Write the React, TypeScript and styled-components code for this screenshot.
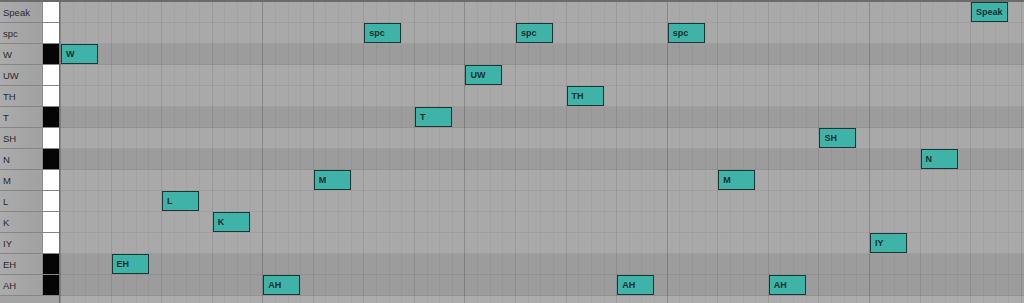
import styled, { createGlobalStyle } from 'styled-components';

const BEAT = 50.56;
const ROW_H = 21;

const GlobalStyle = createGlobalStyle`
  html, body {
    margin: 0;
    padding: 0;
    background: #a9a9a9;
    overflow: hidden;
  }
  body {
    font-family: "Liberation Sans", Arial, sans-serif;
  }
`;

type Lane = { name: string; black: boolean; notes: number[] };

// note positions are beat indexes from the start of the clip
const lanes: Lane[] = [
  { name: 'Speak', black: false, notes: [18] },
  { name: 'spc', black: false, notes: [6, 9, 12] },
  { name: 'W', black: true, notes: [0] },
  { name: 'UW', black: false, notes: [8] },
  { name: 'TH', black: false, notes: [10] },
  { name: 'T', black: true, notes: [7] },
  { name: 'SH', black: false, notes: [15] },
  { name: 'N', black: true, notes: [17] },
  { name: 'M', black: false, notes: [5, 13] },
  { name: 'L', black: false, notes: [2] },
  { name: 'K', black: false, notes: [3] },
  { name: 'IY', black: false, notes: [16] },
  { name: 'EH', black: true, notes: [1] },
  { name: 'AH', black: true, notes: [4, 11, 14] },
];

function App() {
  return (
    <>
      <GlobalStyle />
      <Editor>
        <TopStrip />
        <Body>
          <KeyColumn>
            {lanes.map((lane) => (
              <KeyRow key={lane.name}>
                <Label>{lane.name}</Label>
                <Key $black={lane.black} />
              </KeyRow>
            ))}
            <KeyFooter />
          </KeyColumn>
          <Grid>
            {lanes.map((lane) => (
              <LaneRow key={lane.name} $black={lane.black}>
                {lane.notes.map((beat) => (
                  <Note key={beat} style={{ left: beat * BEAT + 1 }}>
                    {lane.name}
                  </Note>
                ))}
              </LaneRow>
            ))}
            <GridFooter />
          </Grid>
        </Body>
      </Editor>
    </>
  );
}

export default App;

const Editor = styled.div`
  width: 1024px;
  height: 303px;
  display: flex;
  flex-direction: column;
  background: #a9a9a9;
  overflow: hidden;
`;

const TopStrip = styled.div`
  height: 2px;
  background: #6b6b6b;
  flex: none;
`;

const Body = styled.div`
  flex: 1;
  display: flex;
`;

const KeyColumn = styled.div`
  width: 60px;
  flex: none;
  display: flex;
  flex-direction: column;
  border-right: 1px solid #6f6f6f;
  box-sizing: border-box;
`;

const KeyRow = styled.div`
  height: ${ROW_H}px;
  display: flex;
  box-sizing: border-box;
  border-bottom: 1px solid #858585;
`;

const Label = styled.div`
  width: 43px;
  flex: none;
  display: flex;
  align-items: center;
  padding-left: 3px;
  box-sizing: border-box;
  font-size: 9.5px;
  color: #2a2a2a;
  background: linear-gradient(to right, #ababab, #a1a1a1);
  border-right: 1px solid #8a8a8a;
`;

const Key = styled.div<{ $black: boolean }>`
  flex: 1;
  background: ${(p) => (p.$black ? '#050505' : '#ffffff')};
`;

const KeyFooter = styled.div`
  flex: 1;
  background: #a3a3a3;
`;

const Grid = styled.div`
  flex: 1;
  display: flex;
  flex-direction: column;
  background-image:
    repeating-linear-gradient(
      to right,
      rgba(0, 0, 0, 0.11) 0,
      rgba(0, 0, 0, 0.11) 1px,
      transparent 1px,
      transparent ${BEAT * 4}px
    ),
    repeating-linear-gradient(
      to right,
      rgba(0, 0, 0, 0.06) 0,
      rgba(0, 0, 0, 0.06) 1px,
      transparent 1px,
      transparent ${BEAT}px
    ),
    repeating-linear-gradient(
      to right,
      rgba(0, 0, 0, 0.035) 0,
      rgba(0, 0, 0, 0.035) 1px,
      transparent 1px,
      transparent ${BEAT / 4}px
    );
`;

const LaneRow = styled.div<{ $black: boolean }>`
  position: relative;
  height: ${ROW_H}px;
  box-sizing: border-box;
  border-bottom: 1px solid rgba(0, 0, 0, 0.06);
  background: ${(p) => (p.$black ? 'rgba(0, 0, 0, 0.075)' : 'rgba(255, 255, 255, 0)')};
`;

const GridFooter = styled.div`
  flex: 1;
  background: rgba(255, 255, 255, 0.04);
`;

const Note = styled.div`
  position: absolute;
  top: 0;
  width: 37px;
  height: 20px;
  box-sizing: border-box;
  border: 1px solid #1d3634;
  background: #3fb3a8;
  color: #16302d;
  font-size: 9px;
  font-weight: bold;
  padding: 0 0 0 4px;
  display: flex;
  align-items: center;
`;
